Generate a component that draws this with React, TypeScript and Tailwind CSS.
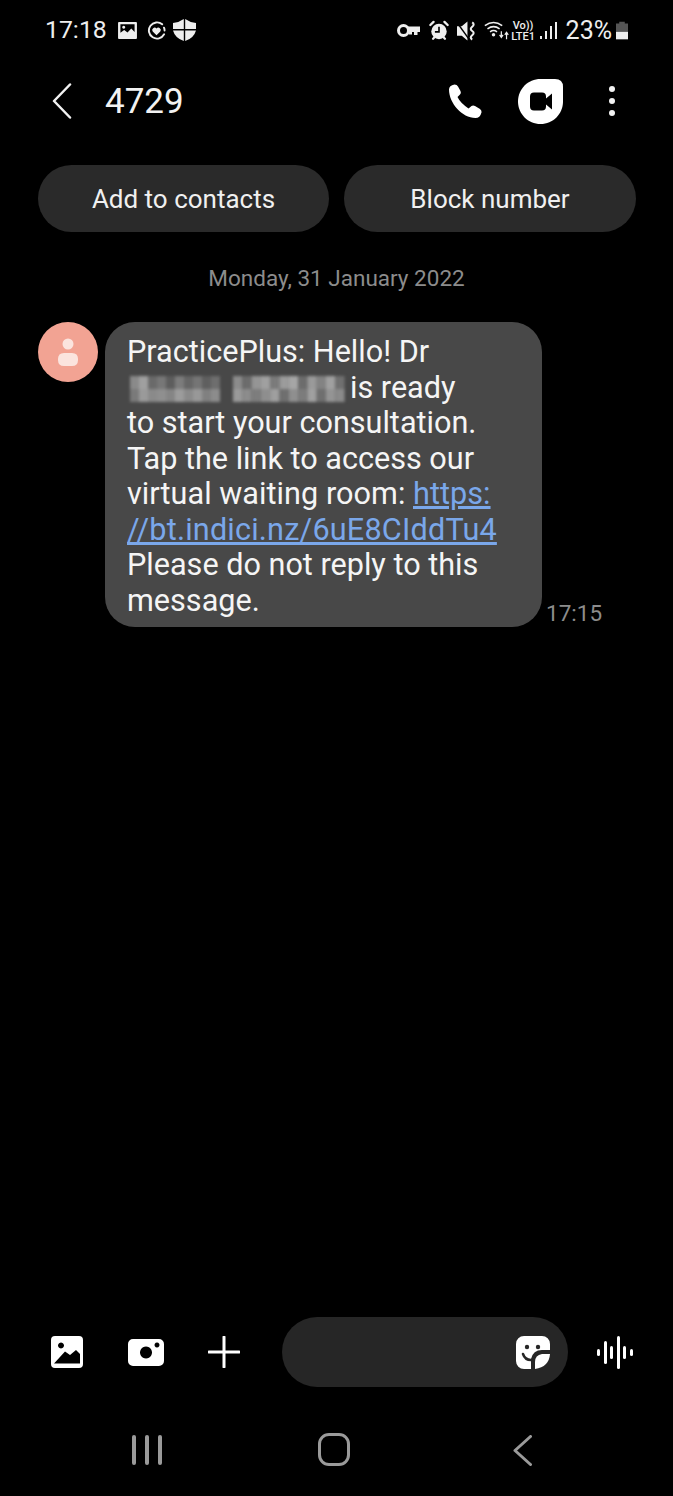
import React from 'react';

// pixelated name, one [top, bottom] pair of grays per column
const wordOne = [
  ['#8a8a8a', '#7a7a7a'], ['#a0a0a0', '#9a9a9a'], ['#6a6a6a', '#8a8a8a'], ['#777', '#8f8f8f'], ['#5d5d5d', '#858585'],
  ['#7c7c7c', '#9c9c9c'], ['#666', '#8a8a8a'], ['#757575', '#989898'], ['#5f5f5f', '#808080'], ['#6e6e6e', '#8c8c8c'],
];
const wordTwo = [
  ['#8c8c8c', '#9a9a9a'], ['#6c6c6c', '#8c8c8c'], ['#959595', '#7d7d7d'], ['#a0a0a0', '#8e8e8e'], ['#7b7b7b', '#9f9f9f'],
  ['#9c9c9c', '#6f6f6f'], ['#a6a6a6', '#8f8f8f'], ['#6c6c6c', '#7c7c7c'], ['#9a9a9a', '#a0a0a0'], ['#838383', '#6f6f6f'],
  ['#a0a0a0', '#949494'], ['#707070', '#8a8a8a'],
];

const BlurredName = () => (
  <svg width="218" height="30" viewBox="0 0 218 30" className="inline-block align-middle mr-[5px] -mt-[1px] blur-[1.5px]">
    {wordOne.map(([top, bottom], i) => (
      <g key={i}>
        <rect x={3 + i * 9} y="2" width="9" height="13" fill={top} />
        <rect x={3 + i * 9} y="15" width="9" height="13" fill={bottom} />
      </g>
    ))}
    {wordTwo.map(([top, bottom], i) => (
      <g key={i}>
        <rect x={106 + i * 9.300} y="2" width="9.300" height="13" fill={top} />
        <rect x={106 + i * 9.300} y="15" width="9.300" height="13" fill={bottom} />
      </g>
    ))}
  </svg>
);

const StatusBar = () => (
  <div className="h-[60px] flex items-center justify-between pl-[45px] pr-[45px] pt-[1px] text-[#eeeeee]">
    <div className="flex items-center">
      <span className="text-[24.800px] leading-none mr-[11px]">17:18</span>
      <svg width="19" height="17" viewBox="0 0 20 18" className="mr-[10px]">
        <path fill="#eee" fillRule="evenodd" d="M1 0h18a1 1 0 0 1 1 1v16a1 1 0 0 1-1 1H1a1 1 0 0 1-1-1V1a1 1 0 0 1 1-1zm1.500 2.500v9l4-3 3.500 2.500 4-4 3.500 3.500v-8zM6 4a1.600 1.600 0 1 1-.01 0z" />
      </svg>
      <svg width="19" height="19" viewBox="0 0 20 20" className="mr-[7px]">
        <path fill="none" stroke="#eee" strokeWidth="2" strokeLinecap="round" d="M16 3.500A8.500 8.500 0 1 0 18 14M18.500 10a8 8 0 0 0-.6-3" />
        <path fill="#eee" d="M10 15l-4-4a2.400 2.400 0 0 1 4-3 2.400 2.400 0 0 1 4 3z" />
      </svg>
      <svg width="23" height="22" viewBox="0 0 23 22">
        <path fill="#eee" d="M10.800 0v10H0V4Q6 3.500 10.800 0zM12.200 0Q17 3.500 23 4v6H12.200zM0 11.500h10.800V22Q2 19 0 11.500zM12.200 11.500H23Q21 19 12.200 22z" />
      </svg>
    </div>
    <div className="flex items-center">
      <svg width="23" height="13" viewBox="0 0 23 13" className="mr-[9px]">
        <circle cx="6.500" cy="6.500" r="5" fill="none" stroke="#eee" strokeWidth="3" />
        <path fill="#eee" d="M10 2.500h13v5.500h-2.500v3h-3.500V8h-2v2.500h-3V8H10z" />
      </svg>
      <svg width="20" height="21" viewBox="0 0 22 22" className="mr-[8px]">
        <circle cx="11" cy="12" r="8.500" fill="#eee" />
        <path fill="none" stroke="#000" strokeWidth="1.800" d="M11 7v5.500H6.500" />
        <path fill="none" stroke="#eee" strokeWidth="2.500" strokeLinecap="round" d="M1.500 5L5 1.500M20.500 5L17 1.500M4.500 20l1.500-1.500M17.500 20L16 18.500" />
      </svg>
      <svg width="19" height="20" viewBox="0 0 20 20" className="mr-[8px]">
        <path fill="#eee" d="M0 5h5L11 0v20l-6-5H0z" />
        <path stroke="#000" strokeWidth="1.500" d="M0 1l13 18" />
        <path fill="none" stroke="#eee" strokeWidth="2.200" d="M16 1q3 2 0 4.500t0 4.500 0 4.500 0 4.500" />
      </svg>
      <svg width="26" height="21" viewBox="0 0 30 24" className="mr-[2px]">
        <path fill="none" stroke="#eee" strokeWidth="1.800" d="M1 6.500Q11-1 21 6.500M4 10q7-5 14 0M7 13.500q4-3 8 0" />
        <circle cx="11" cy="17" r="2" fill="#eee" />
        <path stroke="#eee" strokeWidth="1.400" d="M20 13v7M26 22v-7M18 17l2 3 2-3M24 17l2-3 2 3" fill="none" />
      </svg>
      <div className="flex flex-col items-center text-[11px] leading-[11px] font-medium mr-[5px] mt-[1px] w-[23px]">
        <span>Vo))</span>
        <span>LTE1</span>
      </div>
      <div className="flex items-end gap-[3px] h-[17px] mr-[9px]">
        <div className="w-[2px] h-[3px] bg-[#eeeeee]" />
        <div className="w-[2px] h-[8px] bg-[#eeeeee]" />
        <div className="w-[2px] h-[13px] bg-[#eeeeee]" />
        <div className="w-[2px] h-[17px] bg-[#eeeeee]" />
      </div>
      <span className="text-[25px] leading-none mr-[4px]">23%</span>
      <svg width="12" height="19" viewBox="0 0 13 19">
        <path fill="#555" d="M3.500 0h6v2H13v17H0V2h3.500z" />
        <rect y="11" width="13" height="8" fill="#eee" />
      </svg>
    </div>
  </div>
);

const Header = () => (
  <div className="h-[82px] flex items-center pl-[52px] pr-[58px]">
    <svg width="20" height="36" viewBox="0 0 20 36">
      <path d="M18 1.500L2 18l16 16.500" fill="none" stroke="#f2f2f2" strokeWidth="2.500" strokeLinecap="round" strokeLinejoin="round" />
    </svg>
    <span className="ml-[33px] text-[35px] leading-none text-[#f2f2f2]">4729</span>
    <div className="ml-auto flex items-center">
      <svg width="34" height="34" viewBox="0 0 34 34">
        <path fill="#fff" d="M1 5.500Q1 1.500 6.500.500q2.500 0 3.500 2l2.500 4.500q1 2-.5 3.500L9.500 13q2.500 5.500 11 11.500l3-2.500q1.500-1 3.500 0l5 3q2 1.500 1.500 3.500-1.500 5.500-6 5.500C14 34 1 19 1 5.500z" />
      </svg>
      <svg width="45" height="45" viewBox="0 0 45 45" className="ml-[36px]">
        <path fill="#fff" d="M22.500 0H37q8 0 8 8v14.500C45 35 35 45 22.500 45S0 35 0 22.500 10 0 22.500 0z" />
        <path fill="#000" d="M12 17.500q0-4 4-4h8q4 0 4 4v2l6-5v16l-6-5v2q0 4-4 4h-8q-4 0-4-4z" />
      </svg>
      <div className="ml-[46px] flex flex-col gap-[6px]">
        <div className="w-[6px] h-[6px] rounded-full bg-[#f2f2f2]" />
        <div className="w-[6px] h-[6px] rounded-full bg-[#f2f2f2]" />
        <div className="w-[6px] h-[6px] rounded-full bg-[#f2f2f2]" />
      </div>
    </div>
  </div>
);

const Composer = () => (
  <div className="h-[70px] flex items-center pl-[51px]">
    <svg width="32" height="32" viewBox="0 0 32 32">
      <path fill="#fff" fillRule="evenodd" d="M4 0h24a4 4 0 0 1 4 4v24a4 4 0 0 1-4 4H4a4 4 0 0 1-4-4V4a4 4 0 0 1 4-4zM3 27.500h26V18l-4-4-6 5-5-3.500z M10 6.500a3 3 0 1 0 .01 0z" />
    </svg>
    <svg width="36" height="27" viewBox="0 0 36 27" className="ml-[45px]">
      <path fill="#fff" fillRule="evenodd" d="M5 0h26a5 5 0 0 1 5 5v17a5 5 0 0 1-5 5H5a5 5 0 0 1-5-5V5a5 5 0 0 1 5-5zM18 7.500a6 6 0 1 0 .01 0zM29 3.500a2.500 2.500 0 1 0 .01 0z" />
    </svg>
    <svg width="32" height="32" viewBox="0 0 32 32" className="ml-[44px]">
      <path d="M16 1v30M1 16h30" stroke="#fff" strokeWidth="3" strokeLinecap="round" />
    </svg>
    <div className="ml-[42px] w-[286px] h-[70px] rounded-full bg-[#262626] flex items-center justify-end pr-[18px]">
      <svg width="34" height="33" viewBox="0 0 34 33">
        <path fill="#fff" d="M8 0h18a8 8 0 0 1 8 8v6H26q-9 0-11 9v10H8a8 8 0 0 1-8-8V8a8 8 0 0 1 8-8z" />
        <circle cx="11" cy="11" r="2.200" fill="#262626" />
        <circle cx="22" cy="11" r="2.200" fill="#262626" />
        <path d="M7 18q2 6 8 6" fill="none" stroke="#262626" strokeWidth="2.500" strokeLinecap="round" />
        <path fill="#fff" d="M19 33v-7q0-7 7-8h8q-1 13-15 15z" />
      </svg>
    </div>
    <div className="ml-[29px] flex items-center gap-[3.500px]">
      <div className="w-[3px] h-[7px] rounded-full bg-white" />
      <div className="w-[3px] h-[23px] rounded-full bg-white" />
      <div className="w-[3px] h-[13px] rounded-full bg-white" />
      <div className="w-[3px] h-[33px] rounded-full bg-white" />
      <div className="w-[3px] h-[13px] rounded-full bg-white" />
      <div className="w-[3px] h-[7px] rounded-full bg-white" />
    </div>
  </div>
);

const NavBar = () => (
  <div className="h-[109px] flex items-start pt-[46px] pl-[132px]">
    <div className="flex gap-[9px] mt-[2px]">
      <div className="w-[4px] h-[30px] rounded-full bg-[#9a9a9a]" />
      <div className="w-[4px] h-[30px] rounded-full bg-[#9a9a9a]" />
      <div className="w-[4px] h-[30px] rounded-full bg-[#9a9a9a]" />
    </div>
    <div className="ml-[156px] w-[32px] h-[33px] rounded-[11px] border-[3px] border-[#9a9a9a]" />
    <svg width="19" height="31" viewBox="0 0 19 31" className="ml-[163px] mt-[2px]">
      <path d="M17.500 1.500L2 15.500l15.500 14" fill="none" stroke="#9a9a9a" strokeWidth="3" strokeLinecap="round" strokeLinejoin="round" />
    </svg>
  </div>
);

export default function App() {
  return (
    <div className="w-[673px] h-[1496px] bg-black flex flex-col font-['Roboto',sans-serif] overflow-hidden">
      <StatusBar />
      <Header />

      <div className="flex gap-[15px] pl-[38px] pr-[37px] mt-[23px]">
        <button className="w-[291px] h-[67px] rounded-full bg-[#2a2a2a] text-[26px] pt-[1px] text-[#f0f0f0]">Add to contacts</button>
        <button className="w-[292px] h-[67px] rounded-full bg-[#2a2a2a] text-[26px] pt-[1px] text-[#f0f0f0]">Block number</button>
      </div>

      <div className="mt-[33px] text-center text-[22.500px] leading-[26px] h-[26px] text-[#8c8c8c]">Monday, 31 January 2022</div>

      <div className="flex items-start mt-[31px] pl-[38px]">
        <div className="w-[60px] h-[60px] rounded-full bg-[#f2a393] flex items-center justify-center">
          <svg width="20" height="28" viewBox="0 0 20 28">
            <circle cx="10" cy="6" r="5.500" fill="#fbe4de" />
            <path fill="#fbe4de" d="M6 15h8q6 0 6 6v1q0 6-6 6H6q-6 0-6-6v-1q0-6 6-6z" />
          </svg>
        </div>
        <div className="ml-[7px] w-[437px] h-[305px] rounded-[30px] bg-[#484848] pl-[22px] pt-[12px] text-[30.600px] leading-[35.500px] text-[#f5f5f5] whitespace-nowrap">
          <div>PracticePlus: Hello! Dr</div>
          <div className="h-[35.500px]"><BlurredName />is ready</div>
          <div>to start your consultation.</div>
          <div>Tap the link to access our</div>
          <div className="tracking-[0.05px]">virtual waiting room: <span className="text-[#7aa7ea] underline">https:</span></div>
          <div className="tracking-[0.2px]"><span className="text-[#7aa7ea] underline">//bt.indici.nz/6uE8CIddTu4</span></div>
          <div>Please do not reply to this</div>
          <div>message.</div>
        </div>
        <span className="self-end ml-[4px] mb-[1px] text-[22.500px] leading-[26px] text-[#8c8c8c]">17:15</span>
      </div>

      <div className="flex-1" />
      <Composer />
      <NavBar />
    </div>
  );
}
